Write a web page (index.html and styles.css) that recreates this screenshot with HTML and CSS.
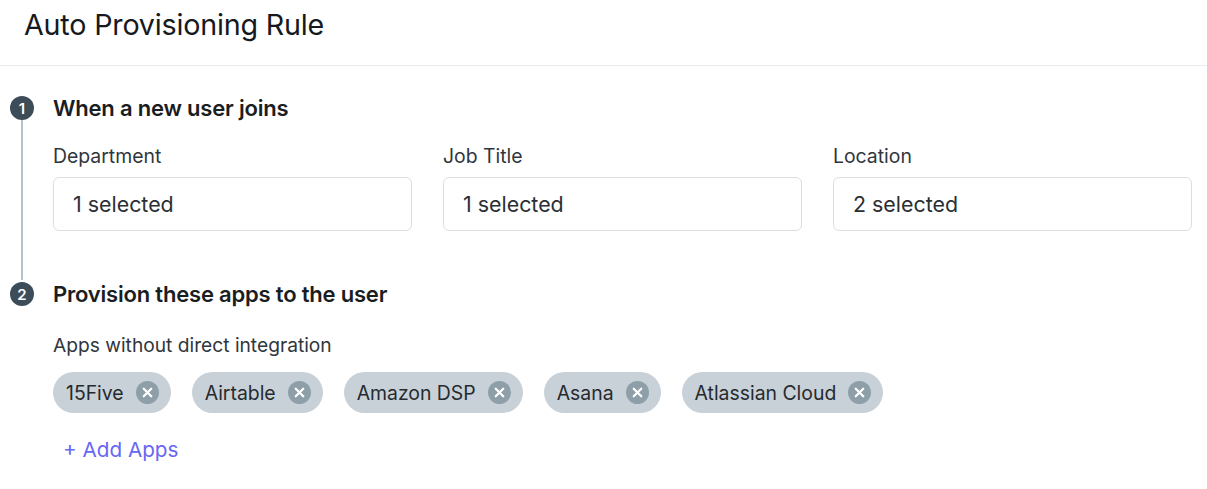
FILE: index.html
```html
<!DOCTYPE html>
<html>
<head>
<meta charset="utf-8">
<link rel="stylesheet" href="styles.css">
</head>
<body>
<div class="page">
  <header class="header"><h1 class="title">Auto Provisioning Rule</h1></header>
  <div class="steps">
    <section class="step">
      <div class="marker"><span class="num">1</span><span class="line"></span></div>
      <div class="content">
        <h2 class="step-title">When a new user joins</h2>
        <div class="fields">
          <div class="field"><div class="label">Department</div><div class="input">1 selected</div></div>
          <div class="field"><div class="label">Job Title</div><div class="input">1 selected</div></div>
          <div class="field"><div class="label">Location</div><div class="input">2 selected</div></div>
        </div>
      </div>
    </section>
    <section class="step">
      <div class="marker"><span class="num">2</span></div>
      <div class="content">
        <h2 class="step-title">Provision these apps to the user</h2>
        <div class="label label-apps">Apps without direct integration</div>
        <div class="chips">
          <span class="chip">15Five<span class="x"><svg viewBox="0 0 22 22" width="23" height="23"><circle cx="11" cy="11" r="11" fill="#8f9fa9"/><path d="M7.4 7.4L14.6 14.6M14.6 7.4L7.4 14.6" stroke="#fff" stroke-width="2.1" stroke-linecap="round"/></svg></span></span>
          <span class="chip">Airtable<span class="x"><svg viewBox="0 0 22 22" width="23" height="23"><circle cx="11" cy="11" r="11" fill="#8f9fa9"/><path d="M7.4 7.4L14.6 14.6M14.6 7.4L7.4 14.6" stroke="#fff" stroke-width="2.1" stroke-linecap="round"/></svg></span></span>
          <span class="chip">Amazon DSP<span class="x"><svg viewBox="0 0 22 22" width="23" height="23"><circle cx="11" cy="11" r="11" fill="#8f9fa9"/><path d="M7.4 7.4L14.6 14.6M14.6 7.4L7.4 14.6" stroke="#fff" stroke-width="2.1" stroke-linecap="round"/></svg></span></span>
          <span class="chip">Asana<span class="x"><svg viewBox="0 0 22 22" width="23" height="23"><circle cx="11" cy="11" r="11" fill="#8f9fa9"/><path d="M7.4 7.4L14.6 14.6M14.6 7.4L7.4 14.6" stroke="#fff" stroke-width="2.1" stroke-linecap="round"/></svg></span></span>
          <span class="chip">Atlassian Cloud<span class="x"><svg viewBox="0 0 22 22" width="23" height="23"><circle cx="11" cy="11" r="11" fill="#8f9fa9"/><path d="M7.4 7.4L14.6 14.6M14.6 7.4L7.4 14.6" stroke="#fff" stroke-width="2.1" stroke-linecap="round"/></svg></span></span>
        </div>
        <a class="add">+ Add Apps</a>
      </div>
    </section>
  </div>
</div>
</body>
</html>
```
FILE: styles.css
```css
* { box-sizing: border-box; }
html, body { margin: 0; padding: 0; background: #fff; }
body { font-family: Inter, "Noto Sans", sans-serif; color: #1f2328; }
.page { width: 1207px; height: 489px; overflow: hidden; }
.header { height: 66px; border-bottom: 1px solid #e9ebed; padding: 7px 24px 0; }
.title { margin: 0; font-size: 28.7px; font-weight: 400; line-height: 36px; color: #16191d; letter-spacing: -0.2px; }
.steps { padding: 28px 15px 0 0; }
.step { display: flex; }
.marker { width: 24px; margin-left: 10px; margin-right: 19px; flex: none; display: flex; flex-direction: column; align-items: center; }
.num { width: 24px; height: 24px; border-radius: 50%; background: #3c4d59; color: #fff; font-size: 15px; font-weight: 600; display: flex; align-items: center; justify-content: center; flex: none; margin-top: 2px; }
.line { width: 2px; flex: 1; background: #b7c1c9; }
.content { flex: 1; }
.step-title { margin: 0; font-size: 22px; font-weight: 600; line-height: 28px; color: #1a1d21; letter-spacing: -0.2px; }
.fields { display: grid; grid-template-columns: repeat(3, 359px); column-gap: 31px; padding-top: 21px; padding-bottom: 49px; }
.label { font-size: 19.4px; line-height: 26px; color: #30363c; }
.label-apps { margin-top: 24px; font-size: 19.2px; }
.input { margin-top: 8px; height: 54px; border: 1px solid #dcdee0; border-radius: 6px; padding: 0 19px; display: flex; align-items: center; font-size: 21.4px; color: #2a2f34; }
.chips { display: flex; gap: 21px; margin-top: 14px; }
.chip { display: inline-flex; align-items: center; height: 41px; border-radius: 21px; background: #c9d1d8; padding: 0 12px 0 13px; font-size: 19.4px; color: #252a2f; }
.x { display: inline-flex; margin-left: 12px; }
.add { display: inline-block; margin-top: 24px; margin-left: 10px; font-size: 20.7px; color: #6767f2; line-height: 26px; }
```
